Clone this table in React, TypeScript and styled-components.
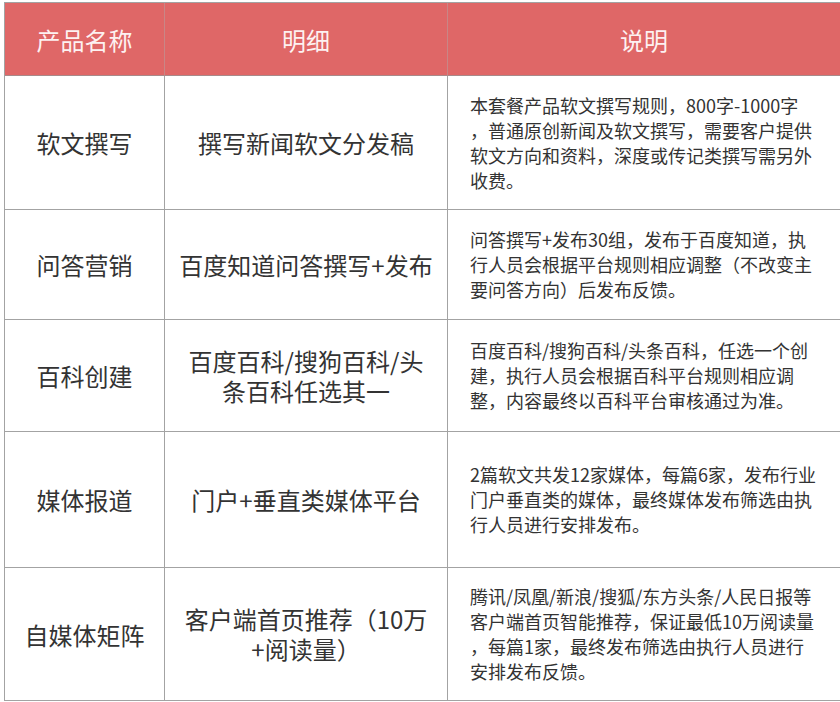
import React from "react";
import styled, { createGlobalStyle } from "styled-components";

const GlobalStyle = createGlobalStyle`
  html, body {
    margin: 0;
    padding: 0;
    background: #ffffff;
    overflow: hidden;
  }
  body {
    font-family: "Noto Sans CJK SC", "Noto Sans", sans-serif;
    color: #333333;
  }
`;

const PageWrapper = styled.div`
  padding: 2px 0 0 4px;
  width: 836px;
`;

const Table = styled.div`
  display: grid;
  grid-template-columns: 160px 283px 392px;
  border-top: 1px solid #a3a3a3;
  border-left: 1px solid #a3a3a3;
`;

const Cell = styled.div<{ $height: number; $last?: boolean }>`
  box-sizing: border-box;
  height: ${(p) => p.$height}px;
  border-right: ${(p) => (p.$last ? "none" : "1px solid #a3a3a3")};
  border-bottom: 1px solid #a3a3a3;
  display: flex;
  flex-direction: column;
  justify-content: center;
`;

const HeadCell = styled(Cell)`
  background: #df6767;
  color: #fdf1f1;
  font-size: 24px;
  align-items: center;
  border-right-color: #c98686;
  border-bottom-color: #a88a8a;
`;

const NameCell = styled(Cell)`
  align-items: center;
  font-size: 24px;
  color: #333333;
`;

const DetailCell = styled(Cell)`
  align-items: center;
  font-size: 24px;
  color: #333333;
`;

const NoteCell = styled(Cell)`
  align-items: flex-start;
  padding-left: 22px;
  font-size: 18px;
  color: #333333;
`;

const Line = styled.div<{ $lh: number }>`
  white-space: nowrap;
  height: ${(p) => p.$lh}px;
  line-height: ${(p) => p.$lh}px;
`;

interface Row {
  name: string;
  detail: string[];
  note: string[];
  height: number;
}

const rows: Row[] = [
  {
    name: "软文撰写",
    detail: ["撰写新闻软文分发稿"],
    note: [
      "本套餐产品软文撰写规则，800字-1000字",
      "，普通原创新闻及软文撰写，需要客户提供",
      "软文方向和资料，深度或传记类撰写需另外",
      "收费。",
    ],
    height: 134,
  },
  {
    name: "问答营销",
    detail: ["百度知道问答撰写+发布"],
    note: [
      "问答撰写+发布30组，发布于百度知道，执",
      "行人员会根据平台规则相应调整（不改变主",
      "要问答方向）后发布反馈。",
    ],
    height: 110,
  },
  {
    name: "百科创建",
    detail: ["百度百科/搜狗百科/头", "条百科任选其一"],
    note: [
      "百度百科/搜狗百科/头条百科，任选一个创",
      "建，执行人员会根据百科平台规则相应调",
      "整，内容最终以百科平台审核通过为准。",
    ],
    height: 112,
  },
  {
    name: "媒体报道",
    detail: ["门户+垂直类媒体平台"],
    note: [
      "2篇软文共发12家媒体，每篇6家，发布行业",
      "门户垂直类的媒体，最终媒体发布筛选由执",
      "行人员进行安排发布。",
    ],
    height: 136,
  },
  {
    name: "自媒体矩阵",
    detail: ["客户端首页推荐（10万", "+阅读量）"],
    note: [
      "腾讯/凤凰/新浪/搜狐/东方头条/人民日报等",
      "客户端首页智能推荐，保证最低10万阅读量",
      "，每篇1家，最终发布筛选由执行人员进行",
      "安排发布反馈。",
    ],
    height: 133,
  },
];

function App() {
  return (
    <PageWrapper>
      <GlobalStyle />
      <Table>
        <HeadCell $height={73}>产品名称</HeadCell>
        <HeadCell $height={73}>明细</HeadCell>
        <HeadCell $height={73} $last>
          说明
        </HeadCell>
        {rows.map((row) => (
          <React.Fragment key={row.name}>
            <NameCell $height={row.height}>{row.name}</NameCell>
            <DetailCell $height={row.height}>
              {row.detail.map((l) => (
                <Line key={l} $lh={30}>
                  {l}
                </Line>
              ))}
            </DetailCell>
            <NoteCell $height={row.height} $last>
              {row.note.map((l) => (
                <Line key={l} $lh={25}>
                  {l}
                </Line>
              ))}
            </NoteCell>
          </React.Fragment>
        ))}
      </Table>
    </PageWrapper>
  );
}

export default App;
